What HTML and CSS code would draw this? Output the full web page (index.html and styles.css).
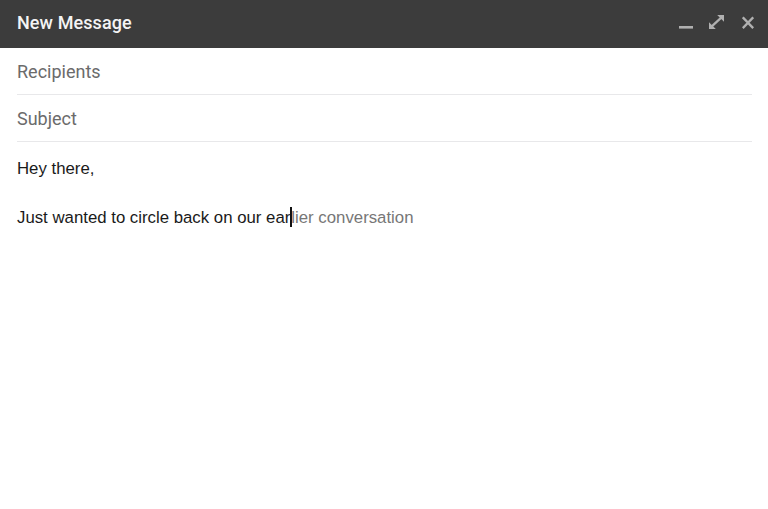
FILE: index.html
```html
<!DOCTYPE html>
<html>
<head>
<meta charset="utf-8">
<link rel="stylesheet" href="styles.css">
</head>
<body>
<div class="compose">
  <header class="bar">
    <span class="title">New Message</span>
    <div class="actions">
      <svg class="icon min" width="14" height="48" viewBox="0 0 14 48"><rect x="0" y="26" width="14" height="2.6" fill="#b0b0b0"/></svg>
      <svg class="icon exp" width="15" height="48" viewBox="0 0 15 48"><path d="M8.2 15H15v6.8z M0 29v-6.8L6.8 29z" fill="#b0b0b0"/><path d="M2.2 26.8L12.8 17.2" stroke="#b0b0b0" stroke-width="2.3"/></svg>
      <svg class="icon cls" width="12" height="48" viewBox="0 0 12 48"><path d="M0.8 17.3l10.4 10.8M11.2 17.3L0.8 28.1" stroke="#b0b0b0" stroke-width="2.3"/></svg>
    </div>
  </header>
  <div class="field">Recipients</div>
  <div class="field">Subject</div>
  <div class="body">
    <p>Hey there,</p>
    <p>Just wanted to circle back on our ear<span class="caret"></span><span class="ghost">lier conversation</span></p>
  </div>
</div>
</body>
</html>
```
FILE: styles.css
```css
html, body { margin: 0; padding: 0; background: #fff; }
.compose { width: 768px; height: 509px; display: flex; flex-direction: column; }
.bar {
  height: 48px; background: #3c3c3c; display: flex; align-items: center;
  justify-content: space-between; padding: 0 14px 3px 17px; box-sizing: border-box;
}
.title { font-family: Roboto, "Noto Sans", sans-serif; font-weight: 500; font-size: 18px; color: #f4f4f4; letter-spacing: 0.1px; }
.actions { display: flex; align-self: flex-start; height: 48px; }
.icon { display: block; }
.exp { margin-left: 16px; }
.cls { margin-left: 18px; }
.field {
  margin: 0 16px 0 17px; height: 46px; border-bottom: 1px solid #e8e8ea;
  display: flex; align-items: center; font-family: Roboto, sans-serif; font-size: 18px; color: #6b6b6b;
}
.body { padding: 0 17px; font-family: "Liberation Sans", Arial, sans-serif; font-size: 16.8px; color: #1a1a1a; }
.body p { margin: 17px 0 0; line-height: 19px; }
.body p + p { margin-top: 29px; }
.caret { display: inline-block; width: 2px; height: 20px; background: #111; vertical-align: -4px; margin: 0 -1px 0 0; }
.ghost { color: #777; }
```
